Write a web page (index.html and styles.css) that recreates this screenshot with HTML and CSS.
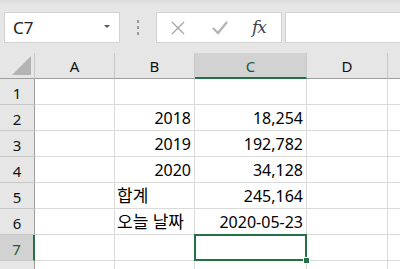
FILE: index.html
```html
<!DOCTYPE html>
<html lang="ko">
<head>
    <meta charset="UTF-8">
    <title>Sheet1</title>
    <link rel="stylesheet" href="styles.css">
</head>
<body>
    <div class="toolbar">
        <div class="name-box">
            <span>C7</span>
            <span class="drop"></span>
        </div>
        <div class="grip"><i></i><i></i><i></i></div>
        <div class="fx-group">
            <svg width="16" height="16" viewBox="0 0 16 16" class="btn-x">
                <path d="M2 2 L14 14 M14 2 L2 14" stroke="#a6a6a6" stroke-width="1.4" fill="none"/>
            </svg>
            <svg width="16" height="14" viewBox="0 0 16 14" class="btn-ok">
                <path d="M1 7 L6 12 L15 1" stroke="#b3b3b3" stroke-width="2.2" fill="none"/>
            </svg>
            <span class="fx">fx</span>
        </div>
        <div class="formula"></div>
    </div>

    <div class="sheet">
        <div class="hd corner"><span class="tri"></span></div>
        <div class="hd col">A</div>
        <div class="hd col">B</div>
        <div class="hd col active">C</div>
        <div class="hd col">D</div>
        <div class="hd col last"></div>

        <div class="hd row">1</div>
        <div class="cell"></div><div class="cell"></div><div class="cell"></div><div class="cell"></div><div class="cell last"></div>

        <div class="hd row">2</div>
        <div class="cell"></div><div class="cell num">2018</div><div class="cell num">18,254</div><div class="cell"></div><div class="cell last"></div>

        <div class="hd row">3</div>
        <div class="cell"></div><div class="cell num">2019</div><div class="cell num">192,782</div><div class="cell"></div><div class="cell last"></div>

        <div class="hd row">4</div>
        <div class="cell"></div><div class="cell num">2020</div><div class="cell num">34,128</div><div class="cell"></div><div class="cell last"></div>

        <div class="hd row">5</div>
        <div class="cell"></div><div class="cell txt">합계</div><div class="cell num">245,164</div><div class="cell"></div><div class="cell last"></div>

        <div class="hd row">6</div>
        <div class="cell"></div><div class="cell txt">오늘 날짜</div><div class="cell num">2020-05-23</div><div class="cell"></div><div class="cell last"></div>

        <div class="hd row active">7</div>
        <div class="cell"></div><div class="cell"></div><div class="cell selected"><span class="handle"></span></div><div class="cell"></div><div class="cell last"></div>

        <div class="hd row"></div>
        <div class="cell"></div><div class="cell"></div><div class="cell"></div><div class="cell"></div><div class="cell last"></div>
    </div>
</body>
</html>
```

FILE: styles.css
```css
body {
    margin: 0;
    background: #ffffff;
    font-family: "Noto Sans", "Noto Sans CJK KR", sans-serif;
    color: #000;
    overflow: hidden;
}
.toolbar {
    height: 53px;
    background: linear-gradient(to bottom, #d9d9d9 0, #e6e6e6 5px, #e6e6e6 100%);
    display: flex;
    align-items: flex-start;
    padding-top: 12px;
    box-sizing: border-box;
}
.name-box {
    margin-left: 4px;
    width: 116px;
    height: 31px;
    box-sizing: border-box;
    background: #fff;
    border: 1px solid #d2d2d2;
    display: flex;
    align-items: center;
    justify-content: space-between;
    padding: 0 9px 0 8px;
    font-size: 17px;
    color: #222;
}
.drop {
    width: 0;
    height: 0;
    border-left: 3px solid transparent;
    border-right: 3px solid transparent;
    border-top: 3px solid #555;
    margin-bottom: 2px;
}
.grip {
    width: 36px;
    height: 31px;
    display: flex;
    flex-direction: column;
    align-items: center;
    justify-content: center;
    gap: 3px;
}
.grip i {
    width: 2px;
    height: 3px;
    background: #999;
}
.fx-group {
    width: 126px;
    height: 31px;
    box-sizing: border-box;
    background: #fff;
    border: 1px solid #d2d2d2;
    display: flex;
    align-items: center;
    padding-left: 13px;
}
.btn-x {
    margin-right: 26px;
}
.btn-ok {
    margin-right: 24px;
}
.fx {
    font-family: "DejaVu Serif", "Liberation Serif", serif;
    font-style: italic;
    font-size: 17px;
    color: #444;
    letter-spacing: -1px;
    margin-top: -2px;
}
.formula {
    margin-left: 3px;
    flex: 1;
    height: 31px;
    box-sizing: border-box;
    background: #fff;
    border: 1px solid #d2d2d2;
    border-right: none;
}
.sheet {
    display: grid;
    grid-template-columns: 35px 80px 80px 112px 81px 1fr;
    grid-auto-rows: 26px;
}
.hd {
    background: #e6e6e6;
    box-sizing: border-box;
    font-size: 15px;
    color: #111;
    display: flex;
    align-items: center;
    justify-content: center;
}
.hd.col {
    border-right: 1px solid #c8c8c8;
    border-bottom: 1px solid #9e9e9e;
    padding-top: 1px;
}
.hd.col.last {
    border-right: none;
}
.hd.col.active {
    background: #d2d2d2;
    border-bottom: 2px solid #217346;
    color: #1e5a36;
}
.hd.corner {
    border-right: 1px solid #c8c8c8;
    border-bottom: 1px solid #9e9e9e;
    position: relative;
}
.tri {
    position: absolute;
    right: 3px;
    bottom: 3px;
    width: 0;
    height: 0;
    border-left: 19px solid transparent;
    border-bottom: 19px solid #b4b4b4;
}
.hd.row {
    border-right: 1px solid #9e9e9e;
    border-bottom: 1px solid #c8c8c8;
    padding-top: 2px;
}
.hd.row.active {
    background: #d2d2d2;
    border-right: 2px solid #217346;
    color: #1e5a36;
}
.cell {
    box-sizing: border-box;
    border-right: 1px solid #dadada;
    border-bottom: 1px solid #dadada;
    font-size: 16px;
    display: flex;
    align-items: flex-end;
    padding: 0 3px 1px 4px;
    line-height: 22px;
    white-space: nowrap;
}
.cell.last {
    border-right: none;
}
.num {
    justify-content: flex-end;
}
.txt {
    justify-content: flex-start;
    font-size: 17px;
    padding-left: 2px;
}
.selected {
    position: relative;
}
.selected::after {
    content: "";
    position: absolute;
    left: -1px;
    top: -1px;
    right: -1px;
    bottom: -1px;
    border: 2px solid #217346;
}
.handle {
    position: absolute;
    right: -4px;
    bottom: -4px;
    width: 5px;
    height: 5px;
    background: #217346;
    border: 1px solid #fff;
    z-index: 1;
}
```
